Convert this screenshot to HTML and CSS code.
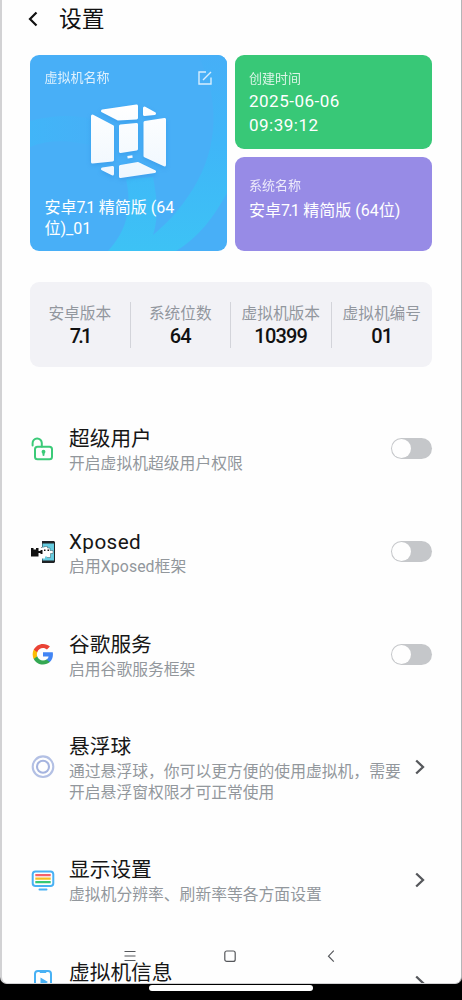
FILE: index.html
```html
<!DOCTYPE html>
<html lang="zh-CN">
<head>
<meta charset="utf-8">
<title>设置</title>
<link rel="stylesheet" href="styles.css">
</head>
<body>
<div class="screen">
  <header class="topbar">
    <svg class="back" width="12" height="18" viewBox="0 0 12 18"><path d="M9.500 2.500L3 9L9.500 15.500"/></svg>
    <h1>设置</h1>
  </header>

  <section class="cards">
    <div class="card blue">
      <svg class="art" viewBox="0 0 197 196" preserveAspectRatio="none">
        <defs>
          <linearGradient id="ring" x1="0" y1="0" x2="0" y2="1"><stop offset="0" stop-color="#46aff7"/><stop offset=".45" stop-color="#3fb6f8"/><stop offset="1" stop-color="#3dc2f5"/></linearGradient>
          <linearGradient id="arc" x1="0" y1="0" x2="1" y2="0"><stop offset="0" stop-color="#41b5f8"/><stop offset="1" stop-color="#46b0f7"/></linearGradient>
          <linearGradient id="face" gradientUnits="userSpaceOnUse" x1="0" y1="50" x2="0" y2="122"><stop offset="0" stop-color="#fff"/><stop offset="1" stop-color="#eff7fe"/></linearGradient>
        </defs>
        <path fill="url(#ring)" d="M168 0C190 44 189 92 163 134C149 156 136 169 123 180C129 162 127 143 123 122L96 124C103 155 95 178 78 196H146C168 183 184 162 197 138V0Z"/>
        <path fill="url(#arc)" d="M0 66C24 60 45 59 65 65V91C43 86 22 83 0 92Z"/>
        <g class="cube" fill="url(#face)" stroke="url(#face)">
          <path d="M72.500 56L106.500 51V63L88 64Z"/>
          <path d="M114.500 53L124.500 58.500L114.500 59.500Z"/>
          <path d="M62.500 61L82.500 71.500V105L62.500 107Z"/>
          <path d="M90.500 71L106.500 69.500V94L90.500 96.500Z"/>
          <path d="M115 67.500L134.500 64.500V110L115 101Z"/>
          <path stroke-width="2.500" d="M97.500 102.300L102.500 101.500"/>
          <path d="M72.500 114L82.500 112.500V119Z"/>
          <path d="M90.500 111.500L108 108.500L124.500 116.500L90.500 121.500Z"/>
        </g>
      </svg>
      <div class="card-head"><span class="label">虚拟机名称</span>
        <svg class="edit" width="14" height="14" viewBox="0 0 14 14"><path d="M8 1H1V13H13V6.500M5 9L13 1"/></svg>
      </div>
      <div class="value name">安卓<span class="tight">7.1</span> 精简版 (64<br>位)_01</div>
    </div>
    <div class="stack">
      <div class="card green"><span class="label">创建时间</span><div class="value date">2025-06-06<br>09:39:12</div></div>
      <div class="card purple"><span class="label">系统名称</span><div class="value system">安卓<span class="tight">7.1</span> 精简版 (64位)</div></div>
    </div>
  </section>

  <section class="stats">
    <div class="stat"><span>安卓版本</span><b class="short">7.1</b></div>
    <div class="stat"><span>系统位数</span><b>64</b></div>
    <div class="stat"><span>虚拟机版本</span><b>10399</b></div>
    <div class="stat"><span>虚拟机编号</span><b>01</b></div>
  </section>

  <main class="list">
    <div class="row">
      <svg class="icon" viewBox="0 0 26 26" fill="none" stroke="#3bca78" stroke-width="2" stroke-linecap="round"><rect x="5" y="10.700" width="17" height="12.500" rx="2.500"/><path d="M2.600 9.500V7.200A4.600 4.600 0 0 1 11.800 7V10.500"/><circle cx="13.500" cy="15.700" r="1.200" fill="#3bca78" stroke-width="1.500"/><path d="M13.500 16V19"/></svg>
      <div class="text"><h2>超级用户</h2><p>开启虚拟机超级用户权限</p></div>
      <span class="toggle"></span>
    </div>
    <div class="row">
      <svg class="icon" viewBox="0 0 26 26"><path fill="#202326" d="M12 2H24L25 3V23L24 24H12V18H11V8H12Z"/><path fill="#66cce0" d="M12.500 4.500H24V21.500H12.500Z"/><path fill="#fff" d="M10 8.500H14V7.500H17.500V9H20V11.500H23V14.500H20.500V18.500H17V17.500H15V19.500H10Z"/><path fill="none" stroke="#37565f" stroke-width=".5" d="M14 8.500V7.500H17.500V9H20V11.500H23V14.500H20.500V18.500H17"/><path fill="#111" d="M1 9H3.500V10.500H6V9H8.500V12H10.500V11H12.500V15H10.500V14H8.500V17.500H1ZM14 10.500H15.500V12H14ZM17.500 10.500H19V12H17.500Z"/></svg>
      <div class="text latin"><h2>Xposed</h2><p>启用Xposed框架</p></div>
      <span class="toggle"></span>
    </div>
    <div class="row">
      <svg class="icon" viewBox="-1.800 -1 27.600 27.600"><path fill="#4285f4" d="M22.560 12.250c0-.78-.07-1.530-.2-2.250H12v4.260h5.920c-.26 1.370-1.040 2.530-2.210 3.310v2.770h3.570c2.080-1.920 3.280-4.740 3.280-8.090z"/><path fill="#34a853" d="M12 23c2.970 0 5.460-.98 7.280-2.660l-3.570-2.770c-.98.66-2.230 1.060-3.710 1.060-2.860 0-5.290-1.930-6.160-4.530H2.180v2.840C3.990 20.530 7.700 23 12 23z"/><path fill="#fbbc05" d="M5.840 14.090c-.22-.66-.35-1.360-.35-2.090s.13-1.430.35-2.090V7.070H2.180C1.430 8.550 1 10.220 1 12s.43 3.450 1.180 4.930l3.660-2.840z"/><path fill="#ea4335" d="M12 5.380c1.620 0 3.060.56 4.210 1.640l3.150-3.150C17.450 2.090 14.970 1 12 1 7.700 1 3.990 3.470 2.180 7.070l3.660 2.840c.87-2.600 3.300-4.530 6.160-4.530z"/></svg>
      <div class="text"><h2>谷歌服务</h2><p>启用谷歌服务框架</p></div>
      <span class="toggle"></span>
    </div>
    <div class="row tall">
      <svg class="icon" viewBox="0 0 26 26" fill="none" stroke-width="2.100"><circle cx="13" cy="12.700" r="10.300" stroke="#b3c0e4"/><circle cx="13" cy="12.700" r="6" stroke="#a5b4df"/></svg>
      <div class="text"><h2>悬浮球</h2><p>通过悬浮球，你可以更方便的使用虚拟机，需要<br>开启悬浮窗权限才可正常使用</p></div>
      <svg class="chev" width="12" height="18" viewBox="0 0 12 18"><path d="M2.200 2.500L9 9L2.200 15.500"/></svg>
    </div>
    <div class="row">
      <svg class="icon" viewBox="0 0 26 26" fill="none" stroke-linecap="round"><rect x="2.700" y="4.500" width="20.600" height="14.500" rx="2.800" stroke="#48b1f4" stroke-width="2"/><path stroke="#48b1f4" stroke-width="2" d="M9.500 22.500H16.500"/><g stroke-width="2.300" stroke-linecap="butt"><path stroke="#f4616c" d="M5.300 8.200H20.700"/><path stroke="#f5bd22" d="M5.300 11.700H20.700"/><path stroke="#35c875" d="M5.300 15.200H20.700"/></g></svg>
      <div class="text"><h2>显示设置</h2><p>虚拟机分辨率、刷新率等各方面设置</p></div>
      <svg class="chev" width="12" height="18" viewBox="0 0 12 18"><path d="M2.200 2.500L9 9L2.200 15.500"/></svg>
    </div>
    <div class="row last">
      <svg class="icon" viewBox="0 0 26 26"><rect x="5" y="2" width="16" height="22" rx="3" fill="none" stroke="#48b1f4" stroke-width="2"/><path fill="#48b1f4" d="M9 2H17L16 4H10ZM10.500 8.500L18 13L10.500 17.500Z"/></svg>
      <div class="text"><h2>虚拟机信息</h2></div>
      <svg class="chev" width="12" height="18" viewBox="0 0 12 18"><path d="M2.200 2.500L9 9L2.200 15.500"/></svg>
    </div>
  </main>

  <nav class="navkeys">
    <svg viewBox="0 0 14 14"><path d="M2.500 2.500H13.500M2.500 7H13.500M2.500 11.500H13.500"/></svg>
    <svg viewBox="0 0 14 14"><rect x="1.800" y="2" width="10.400" height="10.400" rx="2"/></svg>
    <svg viewBox="0 0 14 14"><path d="M9.800 1.700L4.500 7.200L9.800 12.700"/></svg>
  </nav>
</div>
<div class="gesture"><span></span></div>
</body>
</html>
```
FILE: styles.css
```css
* { box-sizing: border-box; margin: 0; padding: 0; }
body {
  width: 462px; height: 1000px; overflow: hidden; background: #000;
  font-family: Roboto, "Noto Sans CJK SC", sans-serif;
  white-space: nowrap;
}
svg { display: block; flex: none; }
.screen {
  position: relative; height: 984px; overflow: hidden; background: #fefefe;
  border: solid #d2d2d4; border-width: 0 1px 1px 2px; border-right-color: #b5b5b7;
  border-radius: 0 0 7px 7px; padding: 0 29px 0 28px;
}
.topbar { height: 55px; display: flex; align-items: flex-start; padding-top: 5px; }
.back { margin: 5px 0 0 -3px; fill: none; stroke: #111; stroke-width: 2.2; }
h1 { margin-left: 20px; font-size: 22.800px; font-weight: 400; line-height: 30px; color: #111; }

.cards { display: grid; grid-template-columns: 197px 197px; gap: 8px; height: 196px; }
.card { border-radius: 9px; color: #fff; overflow: hidden; padding: 0 14px; }
.label { display: block; font-size: 13px; line-height: 18px; opacity: .82; }
.value { font-size: 16px; }
.tight { letter-spacing: -1.800px; margin-right: 1.500px; }
.blue { position: relative; background: #48aff7; padding: 14px 14px 0 14.500px; display: flex; flex-direction: column; }
.art { position: absolute; inset: 0; width: 197px; height: 196px; }
.cube { stroke-width: 3; stroke-linejoin: round; filter: drop-shadow(0 2px 2px rgba(30, 120, 210, .28)); }
.card-head { position: relative; display: flex; justify-content: space-between; align-items: center; }
.edit { margin-right: 1px; fill: none; stroke: #d8eefe; stroke-width: 1.4; }
.name { position: relative; margin-top: 110px; line-height: 21px; }
.stack { display: grid; grid-template-rows: 94px 94px; gap: 8px; }
.green { background: #38c877; padding-top: 15px; }
.purple { background: #978be6; padding-top: 20px; }
.date { font-size: 17px; line-height: 23.500px; letter-spacing: .5px; margin-top: 2px; }
.system { line-height: 24px; margin-top: 4px; }

.stats {
  margin-top: 31px; height: 85px; border-radius: 9px; background: #f2f2f6;
  display: grid; grid-template-columns: repeat(4, 1fr); padding: 20px 0 19px;
}
.stat { text-align: center; border-right: 1px solid #d3d4da; padding-top: 1px; }
.stat:last-child { border-right: 0; }
.stat span { display: block; font-size: 15.700px; line-height: 22px; color: #92979e; }
.stat b { display: block; font-size: 20px; font-weight: 500; line-height: 22px; letter-spacing: -.8px; color: #111; }
.stat .short { letter-spacing: -2.800px; }

.list { margin-top: 30px; }
.row { height: 103px; display: flex; align-items: center; }
.row.tall { height: 122px; }
.row.last { height: 54px; overflow: hidden; align-items: flex-start; }
.last .icon { margin-top: 38px; }
.last .text { padding-top: 28px; }
.last .chev { margin-top: 43px; }
.icon { width: 26px; height: 26px; }
.text { flex: 1; min-width: 0; margin-left: 13px; padding-top: 2px; }
h2 { font-size: 20.700px; font-weight: 400; line-height: 28px; color: #161616; }
p { font-size: 15.800px; line-height: 21px; color: #92979c; }
.latin h2 { letter-spacing: .4px; }
.latin p { letter-spacing: .1px; }
.toggle { width: 41px; height: 21px; border-radius: 11px; background: #c5c7ca; padding: 1px; flex: none; }
.toggle::before { content: ""; display: block; width: 19px; height: 19px; border-radius: 50%; background: #fefefe; }
.chev { margin-right: 6px; fill: none; stroke: #56585c; stroke-width: 2.300; }

.navkeys {
  position: absolute; left: 120px; top: 949px; width: 216px;
  display: flex; justify-content: space-between;
}
.navkeys svg { width: 14px; height: 14px; fill: none; stroke: #55575b; stroke-width: 1.200; }
.gesture { height: 16px; display: flex; justify-content: center; padding-top: 1px; }
.gesture span { width: 164px; height: 6px; border-radius: 3px; background: #fff; }
```
